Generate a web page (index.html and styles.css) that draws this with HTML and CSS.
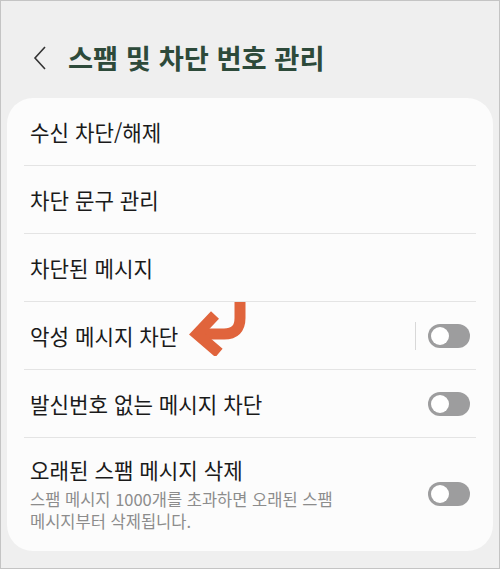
FILE: index.html
```html
<!DOCTYPE html>
<html lang="ko">
<head>
    <meta charset="UTF-8">
    <meta name="viewport" content="width=device-width, initial-scale=1.0">
    <title>스팸 및 차단 번호 관리</title>
    <link rel="stylesheet" href="styles.css">
</head>
<body>
<div class="screen">

    <header class="top">
        <svg class="back" width="14" height="24" viewBox="0 0 14 24">
            <path d="M12 1 L2 12 L12 23" fill="none" stroke="#333" stroke-width="1.6"/>
        </svg>
        <h1>스팸 및 차단 번호 관리</h1>
    </header>

    <!-- settings list -->
    <section class="card">
        <div class="row"><span class="label">수신 차단/해제</span></div>
        <div class="row"><span class="label">차단 문구 관리</span></div>
        <div class="row"><span class="label">차단된 메시지</span></div>
        <div class="row">
            <span class="label">악성 메시지 차단</span>
            <svg class="arrow" width="62" height="54" viewBox="186 302 62 54">
                <path d="M240 302 L240 318 Q240 334 224 334 L202 334" fill="none" stroke="#e0643c" stroke-width="11"/>
                <polyline points="215,315 197,334 219,353" fill="none" stroke="#e0643c" stroke-width="11" stroke-linejoin="miter"/>
            </svg>
            <span class="sep"></span>
            <span class="toggle"><span class="knob"></span></span>
        </div>
        <div class="row"><span class="label">발신번호 없는 메시지 차단</span><span class="toggle"><span class="knob"></span></span></div>
        <div class="row last">
            <div class="text">
                <div class="label">오래된 스팸 메시지 삭제</div>
                <div class="sub">스팸 메시지 1000개를 초과하면 오래된 스팸<br>메시지부터 삭제됩니다.</div>
            </div>
            <span class="toggle"><span class="knob"></span></span>
        </div>
    </section>

</div>
</body>
</html>
```

FILE: styles.css
```css
body { margin: 0; font-family: "Noto Sans CJK KR", "Noto Sans", sans-serif; }
.screen { width: 500px; height: 569px; box-sizing: border-box; border: 1px solid #c4c4c4; background: #efefef; overflow: hidden; }

.top { display: flex; align-items: center; height: 38px; margin: 37px 0 22px 0; }
.back { margin-left: 32px; margin-top: 2px; }
.top h1 { margin: 0 0 0 21px; font-size: 27.3px; font-weight: 700; color: #2d4a3a; line-height: 38px; }

.card { margin: 0 6px; background: #fcfcfc; border-radius: 26px; }
.row { position: relative; display: flex; align-items: center; height: 68px; margin: 0 17px; padding: 0 6px; border-bottom: 1px solid #e4e4e4; box-sizing: border-box; }
.label { font-size: 21.2px; color: #1a1a1a; flex: 1; }
.arrow { position: absolute; left: 162px; top: 0; }
.sep { width: 1px; height: 28px; background: #d8d8d8; margin-right: 12px; }

.toggle { display: flex; width: 42px; height: 24px; padding: 3px; box-sizing: border-box; border-radius: 12px; background: #9d9d9e; }
.knob { width: 18px; height: 18px; border-radius: 50%; background: #fff; }

.row.last { height: auto; border-bottom: none; padding-top: 18px; padding-bottom: 19px; }
.row.last .text { flex: 1; }
.row.last .label { line-height: 28px; margin-bottom: 4px; }
.sub { font-size: 16.5px; line-height: 22px; color: #8c8c8c; }
```
